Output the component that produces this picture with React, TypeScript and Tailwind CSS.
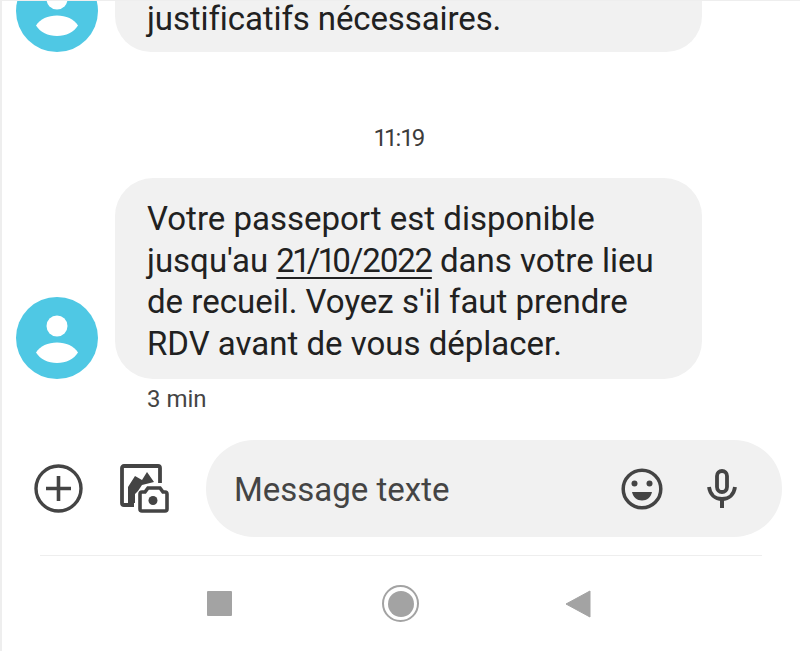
function Avatar() {
  return (
    <svg width="82" height="82" viewBox="0 0 82 82" className="shrink-0">
      <circle cx="41" cy="41" r="41" fill="#4fc8e4" />
      <circle cx="41" cy="29" r="10.5" fill="#fff" />
      <path d="M20 55.500C24 49 32 45.500 41 45.500S58 49 62 55.500C58 62 50 66 41 66S24 62 20 55.500z" fill="#fff" />
    </svg>
  );
}

function PlusCircleIcon() {
  return (
    <svg width="49" height="49" viewBox="0 0 49 49" fill="none">
      <circle cx="24.500" cy="24.500" r="22.500" stroke="#444" strokeWidth="3.400" />
      <path d="M12 24.500h25M24.500 12v25" stroke="#444" strokeWidth="3.600" />
    </svg>
  );
}

function GalleryIcon() {
  return (
    <svg width="50" height="50" viewBox="0 0 50 50" fill="none">
      <path d="M14 41H4a2 2 0 0 1-2-2V4a2 2 0 0 1 2-2h34a2 2 0 0 1 2 2v15" stroke="#444" strokeWidth="3.800" />
      <path d="M8 39V23l7-11 7 4 5-8 7 10-12 3-4 6-3 3v9z" fill="#444" />
      <path d="M20 30a2 2 0 0 1 2-2h3l3-4h12l3 4h2a2 2 0 0 1 2 2v15a2 2 0 0 1-2 2H22a2 2 0 0 1-2-2z" fill="#fff" stroke="#444" strokeWidth="3.600" />
      <circle cx="33" cy="36.500" r="4.500" fill="#444" />
    </svg>
  );
}

function SmileIcon() {
  return (
    <svg width="42" height="42" viewBox="0 0 42 42" fill="none">
      <circle cx="21" cy="21" r="18.800" stroke="#444" strokeWidth="3.500" />
      <circle cx="13.500" cy="15.500" r="3" fill="#444" />
      <circle cx="28.500" cy="15.500" r="3" fill="#444" />
      <path d="M11 24h20c-1 5-5 8.500-10 8.500s-9-3.500-10-8.500z" fill="#444" />
    </svg>
  );
}

function MicIcon() {
  return (
    <svg width="30" height="40" viewBox="0 0 30 40" fill="none">
      <rect x="10" y="2" width="10" height="21" rx="5" stroke="#444" strokeWidth="3.800" />
      <path d="M2 18c1 7.500 6 12 13 12s12-4.500 13-12" stroke="#444" strokeWidth="3.800" />
      <path d="M15 29v10" stroke="#444" strokeWidth="4" />
    </svg>
  );
}

export default function App() {
  return (
    <div className="w-[800px] h-[651px] overflow-hidden bg-white border-l-2 border-t border-[#eeeeee] text-[#212121] font-['Roboto',sans-serif] proportional-nums">
      <div className="flex items-end pl-[14px] mt-[-31px]">
        <Avatar />
        <div className="ml-[17px] w-[587px] h-[82px] bg-[#f1f1f1] rounded-b-[36px] pl-[32px] pt-[28px] text-[33px] leading-[41.500px] tracking-[-0.1px]">
          justificatifs nécessaires.
        </div>
      </div>

      <p className="mt-[71px] text-center text-[24px] leading-[30px] text-[#3c3c3c] pr-[2px]">11:19</p>

      <div className="mt-[25px] flex items-end pl-[14px]">
        <Avatar />
        <div className="ml-[17px] w-[587px] h-[201px] bg-[#f1f1f1] rounded-[38px] pl-[32px] pt-[20px] text-[33px] leading-[41.500px]">
          Votre passeport est disponible
          <br />
          jusqu'au <span className="underline underline-offset-[5px] decoration-2 tracking-[-1.300px]">21/10/2022</span> dans votre lieu
          <br />
          de recueil. Voyez s'il faut prendre
          <br />
          RDV avant de vous déplacer.
        </div>
      </div>

      <p className="mt-[5px] pl-[145px] text-[24px] leading-[30px] text-[#444444]">3 min</p>

      <div className="mt-[26px] flex items-center">
        <div className="ml-[32px]">
          <PlusCircleIcon />
        </div>
        <div className="ml-[37px]">
          <GalleryIcon />
        </div>
        <div className="ml-[36px] w-[576px] h-[97px] rounded-[48px] bg-[#f1f1f1] flex items-center pl-[28px]">
          <span className="text-[33px] text-[#444444] flex-1 pt-[3px]">Message texte</span>
          <SmileIcon />
          <div className="ml-[44px] mr-[45px]">
            <MicIcon />
          </div>
        </div>
      </div>

      <div className="mt-[18px] ml-[38px] w-[722px] h-[1px] bg-[#eeeeee]" />

      <div className="mt-[29px] flex items-center">
        <div className="ml-[205px] w-[25px] h-[25px] bg-[#a3a3a3] rounded-[1px]" />
        <div className="ml-[150px] w-[37px] h-[37px] rounded-full border-[2.500px] border-[#a3a3a3] flex items-center justify-center">
          <div className="w-[26px] h-[26px] rounded-full bg-[#a3a3a3]" />
        </div>
        <svg width="26" height="28" viewBox="0 0 26 28" className="ml-[146px]">
          <path d="M25 1v26L1 14z" fill="#a3a3a3" stroke="#a3a3a3" strokeLinejoin="round" />
        </svg>
      </div>
    </div>
  );
}
